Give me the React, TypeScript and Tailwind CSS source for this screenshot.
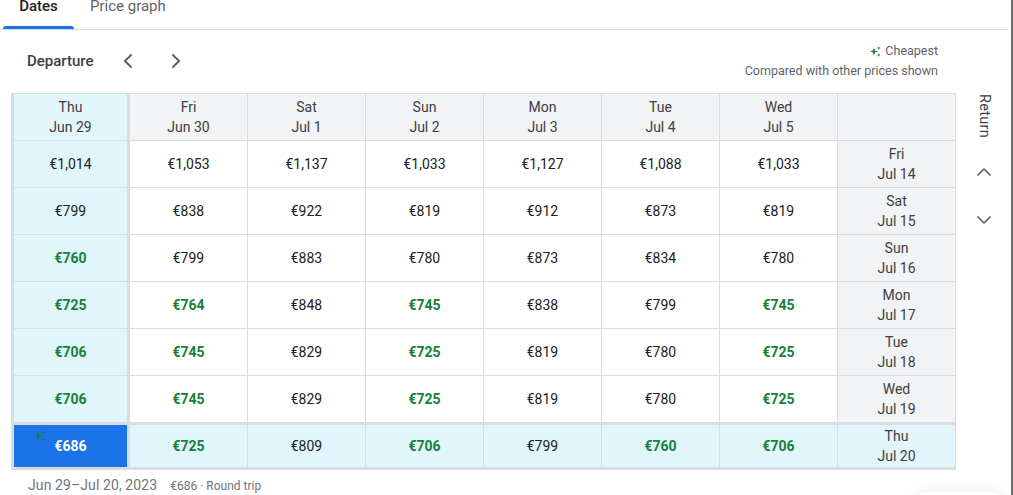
import React from "react";
import { ChevronLeft, ChevronRight, ChevronUp, ChevronDown } from "lucide-react";

const Sparkle = ({ className = "" }: { className?: string }) => (
  <svg viewBox="0 0 12 12" className={className} fill="#188038">
    <path d="M4.3 1.6 L5.4 4.9 L8.6 6 L5.4 7.1 L4.3 10.4 L3.2 7.1 L0 6 L3.2 4.9 Z" />
    <path d="M9.6 0.2 L10.15 1.75 L11.7 2.3 L10.15 2.85 L9.6 4.4 L9.05 2.85 L7.5 2.3 L9.05 1.75 Z" />
    <path d="M9.6 7.6 L10.15 9.15 L11.7 9.7 L10.15 10.25 L9.6 11.8 L9.05 10.25 L7.5 9.7 L9.05 9.15 Z" />
  </svg>
);

const depCols = [
  ["Thu", "Jun 29"],
  ["Fri", "Jun 30"],
  ["Sat", "Jul 1"],
  ["Sun", "Jul 2"],
  ["Mon", "Jul 3"],
  ["Tue", "Jul 4"],
  ["Wed", "Jul 5"],
];

type Price = [string, boolean];

const rows: { day: string; date: string; prices: Price[] }[] = [
  {
    day: "Fri",
    date: "Jul 14",
    prices: [["€1,014", false], ["€1,053", false], ["€1,137", false], ["€1,033", false], ["€1,127", false], ["€1,088", false], ["€1,033", false]],
  },
  {
    day: "Sat",
    date: "Jul 15",
    prices: [["€799", false], ["€838", false], ["€922", false], ["€819", false], ["€912", false], ["€873", false], ["€819", false]],
  },
  {
    day: "Sun",
    date: "Jul 16",
    prices: [["€760", true], ["€799", false], ["€883", false], ["€780", false], ["€873", false], ["€834", false], ["€780", false]],
  },
  {
    day: "Mon",
    date: "Jul 17",
    prices: [["€725", true], ["€764", true], ["€848", false], ["€745", true], ["€838", false], ["€799", false], ["€745", true]],
  },
  {
    day: "Tue",
    date: "Jul 18",
    prices: [["€706", true], ["€745", true], ["€829", false], ["€725", true], ["€819", false], ["€780", false], ["€725", true]],
  },
  {
    day: "Wed",
    date: "Jul 19",
    prices: [["€706", true], ["€745", true], ["€829", false], ["€725", true], ["€819", false], ["€780", false], ["€725", true]],
  },
  {
    day: "Thu",
    date: "Jul 20",
    prices: [["€686", true], ["€725", true], ["€809", false], ["€706", true], ["€799", false], ["€760", true], ["€706", true]],
  },
];

export default function App() {
  return (
    <div
      className="relative flex w-[1013px] h-[495px] overflow-hidden bg-white text-[#202124]"
      style={{ fontFamily: "Roboto, 'Liberation Sans', sans-serif" }}
    >
      <div className="w-[1011px] flex flex-col">
        {/* Tabs */}
        <div className="h-[30px] w-[1008px] border-b border-[#dadce0] flex items-start shrink-0">
          <div className="relative ml-[3px] w-[71px] h-[29px] flex justify-center">
            <span className="-mt-[4px] text-[15px] leading-[20px] font-medium text-[#202124]">Dates</span>
            <div className="absolute left-0 right-0 bottom-0 h-[3px] bg-[#1a73e8] rounded-t-[3px]" />
          </div>
          <div className="ml-[16px] h-[29px] flex">
            <span className="-mt-[4px] text-[15px] leading-[20px] text-[#5f6368]">Price graph</span>
          </div>
        </div>

        {/* Header */}
        <div className="h-[63px] shrink-0 flex items-start justify-between pt-[11px] pr-[73px]">
          <div className="h-[40px] flex items-center pl-[27px]">
            <span className="text-[15px] font-medium text-[#3c4043] w-[89px]">Departure</span>
            <ChevronLeft size={24} strokeWidth={2} color="#5f6368" />
            <ChevronRight size={24} strokeWidth={2} color="#5f6368" className="ml-[24px]" />
          </div>
          <div className="flex flex-col items-end text-[12.5px] leading-[20px] text-[#5f6368]">
            <div className="flex items-center gap-[4px]">
              <Sparkle className="w-[11px] h-[11px]" />
              <span>Cheapest</span>
            </div>
            <div>Compared with other prices shown</div>
          </div>
        </div>

        {/* Grid + return side */}
        <div className="flex items-start">
          <div className="ml-[11px] grid grid-cols-[115px_repeat(7,117px)] gap-px bg-[#dadce0] pl-[3px] pt-px pr-px pb-[3px]">
            {/* header row */}
            {depCols.map(([d, dt], i) => (
              <div
                key={d + dt}
                className={`h-[46px] flex flex-col items-center justify-center text-[14px] leading-[20px] text-[#3c4043] ${
                  i === 0 ? "bg-[#e1f6fa] border-r-2 border-[#dadce0]" : "bg-[#f1f3f4]"
                }`}
              >
                <span>{d}</span>
                <span>{dt}</span>
              </div>
            ))}
            <div className="h-[46px] bg-[#f1f3f4]" />

            {rows.map((r, ri) => {
              const last = ri === rows.length - 1;
              return (
                <React.Fragment key={r.date}>
                  {r.prices.map(([p, g], ci) => {
                    const sel = last && ci === 0;
                    let bg = "bg-white";
                    if (ci === 0 || last) bg = "bg-[#e1f6fa]";
                    if (sel) bg = "bg-[#1a73e8]";
                    const color = sel ? "text-white font-bold" : g ? "text-[#188038] font-bold" : "text-[#202124]";
                    return (
                      <div
                        key={ci}
                        className={`relative flex items-center justify-center text-[14px] ${bg} ${color} ${
                          last ? "h-[44px] border-t-2 border-[#dadce0]" : "h-[46px]"
                        } ${ci === 0 ? "border-r-2 border-[#dadce0]" : ""}`}
                      >
                        {sel && <Sparkle className="absolute left-[20px] top-[5px] w-[12px] h-[12px]" />}
                        <span>{p}</span>
                      </div>
                    );
                  })}
                  <div
                    className={`flex flex-col items-center justify-center text-[14px] leading-[20px] text-[#3c4043] ${
                      last ? "h-[44px] border-t-2 border-[#dadce0] bg-[#e1f6fa]" : "h-[46px] bg-[#f1f3f4]"
                    }`}
                  >
                    <span>{r.day}</span>
                    <span>{r.date}</span>
                  </div>
                </React.Fragment>
              );
            })}
          </div>

          <div className="flex-1 flex flex-col items-center pt-[1px]">
            <span className="[writing-mode:vertical-rl] text-[14.5px] leading-[20px] text-[#3c4043] tracking-[0.3px]">Return</span>
            <ChevronUp size={24} strokeWidth={1.75} color="#5f6368" className="mt-[22px]" />
            <ChevronDown size={24} strokeWidth={1.75} color="#5f6368" className="mt-[24px]" />
          </div>
        </div>

        {/* Footer */}
        <div className="mt-[5px] pl-[28px] flex items-baseline leading-[20px]">
          <span className="text-[14px] text-[#70757a] tracking-[0.1px]">Jun 29–Jul 20, 2023</span>
          <span className="ml-[13px] text-[12px] text-[#70757a]">€686 · Round trip</span>
        </div>
      </div>
      <div className="w-[2px] h-full bg-[#6f6f6f]" />

      {/* floating element shadow at bottom right */}
      <div className="absolute left-[915px] top-[492px] w-[88px] h-[40px] bg-white rounded-[10px] shadow-[0_-3px_12px_rgba(0,0,0,0.06)]" />
    </div>
  );
}
